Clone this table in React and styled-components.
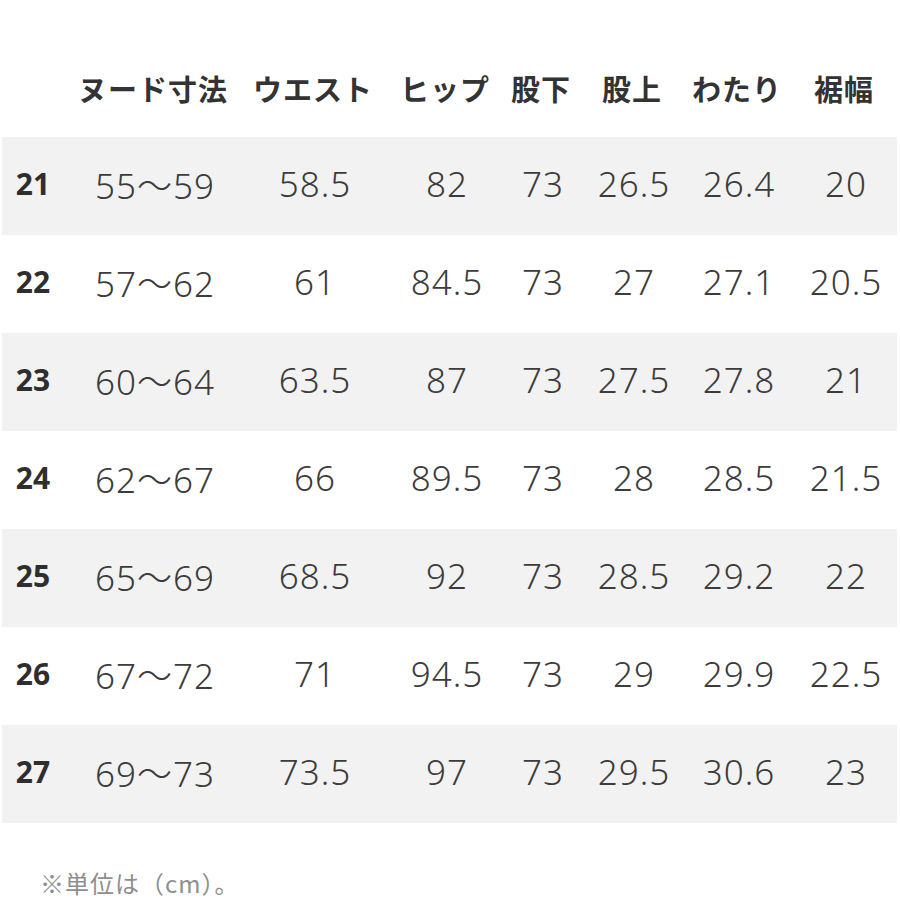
import React from "react";
import styled, { createGlobalStyle } from "styled-components";

const GlobalStyle = createGlobalStyle`
  body {
    margin: 0;
    background: #ffffff;
    font-family: "Noto Sans CJK JP", "Noto Sans", sans-serif;
  }
`;

const COLS = "66px 174px 146px 118px 74px 108px 102px 112px";

const Page = styled.div`
  width: 900px;
  height: 900px;
  background: #ffffff;
  overflow: hidden;
`;

const HeaderRow = styled.div`
  display: grid;
  grid-template-columns: ${COLS};
  height: 137px;
  padding-top: 38px;
  box-sizing: border-box;
  align-items: center;
`;

const HeadCell = styled.div`
  text-align: center;
  font-size: 29px;
  font-weight: 700;
  color: #333333;
  white-space: nowrap;
  letter-spacing: 1px;
`;

const Row = styled.div`
  display: grid;
  grid-template-columns: ${COLS};
  height: 98px;
  box-sizing: border-box;
  padding-bottom: 6px;
  align-items: center;
  margin: 0 3px 0 2px;
  background: ${(p) => (p.$shaded ? "#f2f2f2" : "#ffffff")};
`;

const SizeCell = styled.div`
  text-align: center;
  font-family: "Noto Sans", "Noto Sans CJK JP", sans-serif;
  font-size: 30px;
  font-weight: 700;
  color: #2e2e2e;
  padding-right: 4px;
`;

const Cell = styled.div`
  text-align: center;
  font-family: "Noto Sans", "Noto Sans CJK JP", sans-serif;
  font-size: 35px;
  font-weight: 300;
  letter-spacing: 1px;
  color: #3c3c3c;
  white-space: nowrap;
`;

const Note = styled.p`
  margin: 44px 0 0 40px;
  font-size: 24px;
  line-height: 32px;
  letter-spacing: 1px;
  color: #8e8e8e;
`;

const headers = ["", "ヌード寸法", "ウエスト", "ヒップ", "股下", "股上", "わたり", "裾幅"];

const rows = [
  ["21", "55〜59", "58.5", "82", "73", "26.5", "26.4", "20"],
  ["22", "57〜62", "61", "84.5", "73", "27", "27.1", "20.5"],
  ["23", "60〜64", "63.5", "87", "73", "27.5", "27.8", "21"],
  ["24", "62〜67", "66", "89.5", "73", "28", "28.5", "21.5"],
  ["25", "65〜69", "68.5", "92", "73", "28.5", "29.2", "22"],
  ["26", "67〜72", "71", "94.5", "73", "29", "29.9", "22.5"],
  ["27", "69〜73", "73.5", "97", "73", "29.5", "30.6", "23"],
];

export default function App() {
  return (
    <Page>
      <GlobalStyle />
      <HeaderRow>
        {headers.map((h, i) => (
          <HeadCell key={i}>{h}</HeadCell>
        ))}
      </HeaderRow>
      {rows.map((r, i) => (
        <Row key={r[0]} $shaded={i % 2 === 0}>
          <SizeCell>{r[0]}</SizeCell>
          {r.slice(1).map((v, j) => (
            <Cell key={j}>{v}</Cell>
          ))}
        </Row>
      ))}
      <Note>※単位は（cm）。</Note>
    </Page>
  );
}
